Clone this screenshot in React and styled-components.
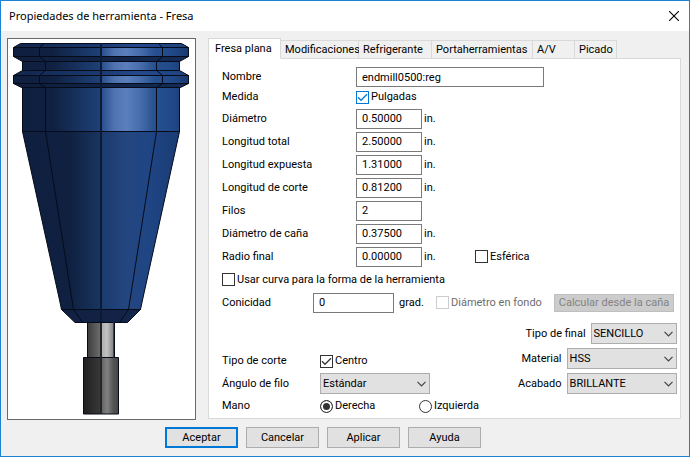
import React, { useState } from 'react'
import styled, { createGlobalStyle, css } from 'styled-components'

const GlobalStyle = createGlobalStyle`
    * {
        box-sizing: border-box;
    }
    body {
        margin: 0;
        background-color: #f0f0f0;
    }
    body, input, select, button {
        font-family: Roboto, "Liberation Sans", sans-serif;
        font-size: 11px;
        line-height: 16px;
        color: #000;
    }
`

const Window = styled.div`
    min-height: 100vh;
    display: flex;
    flex-direction: column;
    border: 1px solid #1883d7;
    background-color: #f0f0f0;
`

const TitleBar = styled.header`
    height: 30px;
    padding: 0 8px;
    display: flex;
    align-items: center;
    justify-content: space-between;
    background-color: #fff;
`

const Title = styled.h1`
    margin: 0;
    font-family: "Noto Sans", "Open Sans", sans-serif;
    font-size: 11px;
    font-weight: 400;
`

const CloseButton = styled.button`
    width: 14px;
    height: 14px;
    padding: 0;
    display: flex;
    align-items: center;
    justify-content: center;
    border: none;
    background: none;
`

const Body = styled.div`
    padding: 7px 8px 0 6px;
    display: flex;
    gap: 12px;
`

const Preview = styled.div`
    flex: 0 0 189px;
    height: 382px;
    border: 1px solid #696969;
    background-color: #fff;

    svg {
        display: block;
        width: 100%;
        height: 100%;
    }
`

const TabArea = styled.div`
    flex: 1;
    min-width: 0;
    display: flex;
    flex-direction: column;
    padding-bottom: 1px;
`

const TabList = styled.div`
    position: relative;
    z-index: 1;
    display: flex;
    align-items: flex-end;
    height: 21px;
`

const Tab = styled.button`
    width: ${props => props.$width};
    height: 19px;
    padding: 0 ${props => props.$first ? "6px" : "4px"};
    border: 1px solid #d9d9d9;
    border-left-width: ${props => props.$first ? "1px" : "0"};
    background-color: #f0f0f0;
    text-align: left;
    white-space: nowrap;
    ${props => props.$active && css`
        height: 21px;
        border-bottom-color: #fff;
        background-color: #fff;
    `}
`

const Panel = styled.form`
    flex: 1;
    margin-top: -1px;
    padding: 8px 5px 4px 13px;
    display: flex;
    flex-direction: column;
    border: 1px solid #d9d9d9;
    background-color: #fff;
`

const Row = styled.div`
    height: ${props => props.$height || "23px"};
    display: flex;
    align-items: center;
`

const FieldLabel = styled.label`
    flex: 0 0 ${props => props.$width || "134px"};
`

const GroupLabel = styled.span`
    flex: 0 0 ${props => props.$width || "134px"};
`

const TextInput = styled.input`
    width: ${props => props.$width || "66px"};
    height: 20px;
    padding: 0 5px;
    border: 1px solid #7a7a7a;
    background-color: #fff;
    outline: none;
`

const Unit = styled.span`
    width: ${props => props.$width || "53px"};
    padding-left: ${props => props.$gap || "2px"};
`

const CheckLabel = styled.label`
    display: flex;
    align-items: center;
    gap: 2px;
    color: ${props => props.$disabled ? "#6d6d6d" : "#000"};
`

const CheckMark = styled.span`
    display: grid;

    input, svg {
        grid-area: 1 / 1;
        width: 13px;
        height: 13px;
        margin: 0;
    }
    input {
        appearance: none;
        border: 1px solid ${props => props.$hot ? "#0078d7" : "#333"};
        background-color: #fff;
    }
    input:disabled {
        border-color: #ccc;
    }
    svg {
        pointer-events: none;
        visibility: hidden;
        color: ${props => props.$hot ? "#0078d7" : "#333"};
    }
    input:checked + svg {
        visibility: visible;
    }
`

const RadioLabel = styled.label`
    width: 99px;
    display: flex;
    align-items: center;
    gap: 2px;
`

const Radio = styled.input`
    appearance: none;
    width: 13px;
    height: 13px;
    margin: 0;
    border: 1px solid #333;
    border-radius: 50%;
    background-color: #fff;

    &:checked {
        background-color: #333;
        box-shadow: inset 0 0 0 2px #fff;
    }
`

const SelectBox = styled.span`
    width: ${props => props.$width || "110px"};
    display: grid;
    align-items: center;

    select, svg {
        grid-area: 1 / 1;
    }
    select {
        appearance: none;
        width: 100%;
        height: 21px;
        padding: 0 2px;
        border: 1px solid #adadad;
        border-radius: 0;
        background-color: #e1e1e1;
    }
    svg {
        justify-self: end;
        margin-right: 4px;
        pointer-events: none;
    }
`

const Button = styled.button`
    width: 73px;
    height: 21px;
    padding: 0;
    border: ${props => props.$primary ? "2px solid #0078d7" : "1px solid #adadad"};
    background-color: #e1e1e1;
`

const CalcButton = styled.button`
    width: 120px;
    height: 18px;
    margin: 0 1px 0 auto;
    padding: 0;
    border: 1px solid #bfbfbf;
    background-color: #ccc;
    color: #838383;
    white-space: nowrap;
`

const Lower = styled.div`
    margin-top: auto;
    display: flex;
    justify-content: space-between;
    align-items: flex-end;
`

const CutOptions = styled.div`
    display: flex;
    flex-direction: column;
    gap: 4px;
`

const FinishOptions = styled.div`
    padding-bottom: 20px;
    display: flex;
    flex-direction: column;
    align-items: flex-end;
    gap: 4px;
`

const SelectRow = styled.div`
    display: flex;
    align-items: center;
    gap: 5px;
`

const Footer = styled.footer`
    padding: 7px 0 8px 164px;
    display: flex;
    gap: 8px;
`

const tabs = [
    { name: "Fresa plana", width: "73px" },
    { name: "Modificaciones", width: "78px" },
    { name: "Refrigerante", width: "73px" },
    { name: "Portaherramientas", width: "101px" },
    { name: "A/V", width: "42px" },
    { name: "Picado", width: "42px" },
]

const fields = [
    { id: "diametro", label: "Diámetro", value: "0.50000", unit: "in." },
    { id: "total", label: "Longitud total", value: "2.50000", unit: "in." },
    { id: "expuesta", label: "Longitud expuesta", value: "1.31000", unit: "in." },
    { id: "corte", label: "Longitud de corte", value: "0.81200", unit: "in." },
    { id: "filos", label: "Filos", value: "2" },
    { id: "cana", label: "Diámetro de caña", value: "0.37500", unit: "in." },
    { id: "radio", label: "Radio final", value: "0.00000", unit: "in.", spherical: true },
]

const Check = ({ label, hot, disabled, defaultChecked }) => (
    <CheckLabel $disabled={disabled}>
        <CheckMark $hot={hot}>
            <input type="checkbox" disabled={disabled} defaultChecked={defaultChecked} />
            <svg viewBox="0 0 13 13" fill="none" stroke="currentColor" strokeWidth="1.3">
                <path d="M2 6.3 L5 9.3 L11 3.3" />
            </svg>
        </CheckMark>
        {label}
    </CheckLabel>
)

const Select = ({ id, width, value }) => (
    <SelectBox $width={width}>
        <select id={id} defaultValue={value}>
            <option>{value}</option>
        </select>
        <svg width="9" height="6" viewBox="0 0 9 6" fill="none" stroke="#444" strokeWidth="1.2">
            <path d="M0.5 0.8 L4.5 4.8 L8.5 0.8" />
        </svg>
    </SelectBox>
)

const ToolDrawing = () => (
    <svg viewBox="8 39 187 380" role="img">
        <defs>
            <linearGradient id="steel" gradientUnits="userSpaceOnUse" x1="13" y1="0" x2="188" y2="0">
                <stop offset="0" stopColor="#0f1f40" />
                <stop offset="0.22" stopColor="#0f2040" />
                <stop offset="0.5" stopColor="#1e4178" />
                <stop offset="0.51" stopColor="#2b5190" />
                <stop offset="0.58" stopColor="#5073b0" />
                <stop offset="0.65" stopColor="#5b7ebc" />
                <stop offset="0.72" stopColor="#4a6fae" />
                <stop offset="0.81" stopColor="#26508f" />
                <stop offset="0.9" stopColor="#224a8a" />
                <stop offset="1" stopColor="#193a70" />
            </linearGradient>
            <linearGradient id="bevel" gradientUnits="userSpaceOnUse" x1="13" y1="0" x2="188" y2="0">
                <stop offset="0" stopColor="#10254c" />
                <stop offset="0.5" stopColor="#1b3a70" />
                <stop offset="0.7" stopColor="#25488a" />
                <stop offset="1" stopColor="#1d4380" />
            </linearGradient>
            <linearGradient id="under" gradientUnits="userSpaceOnUse" x1="13" y1="0" x2="188" y2="0">
                <stop offset="0" stopColor="#0f1e3c" />
                <stop offset="0.6" stopColor="#122347" />
                <stop offset="1" stopColor="#152c57" />
            </linearGradient>
            <linearGradient id="cone">
                <stop offset="0" stopColor="#0f1f40" />
                <stop offset="0.3" stopColor="#0f2040" />
                <stop offset="0.49" stopColor="#18355f" />
                <stop offset="0.51" stopColor="#1c3b6e" />
                <stop offset="0.66" stopColor="#24467f" />
                <stop offset="0.8" stopColor="#1f4584" />
                <stop offset="1" stopColor="#1a3c74" />
            </linearGradient>
            <linearGradient id="shank">
                <stop offset="0" stopColor="#3c3c3c" />
                <stop offset="0.45" stopColor="#6a6a6a" />
                <stop offset="0.55" stopColor="#b0b0b0" />
                <stop offset="0.72" stopColor="#c2c2c2" />
                <stop offset="1" stopColor="#777" />
            </linearGradient>
            <linearGradient id="cutter">
                <stop offset="0" stopColor="#202020" />
                <stop offset="0.48" stopColor="#383838" />
                <stop offset="0.55" stopColor="#6a6a6a" />
                <stop offset="0.68" stopColor="#808080" />
                <stop offset="0.85" stopColor="#545454" />
                <stop offset="1" stopColor="#444" />
            </linearGradient>
        </defs>
        <g stroke="#050b18" strokeWidth="1" strokeLinejoin="round">
            <path fill="url(#bevel)" d="M20.5 43.5 H181.5 L188.5 47.5 H13.5 Z" />
            <path fill="url(#steel)" d="M13.5 47.5 H188.5 V56.5 H13.5 Z" />
            <path fill="url(#under)" d="M13.5 56.5 H188.5 L179.5 61.5 H22.5 Z" />
            <path fill="url(#steel)" d="M22.5 61.5 H179.5 V70.5 H22.5 Z" />
            <path fill="url(#bevel)" d="M22.5 70.5 H179.5 L188.5 75.5 H13.5 Z" />
            <path fill="url(#steel)" d="M13.5 75.5 H188.5 V83.5 H13.5 Z" />
            <path fill="url(#under)" d="M13.5 83.5 H188.5 L180.5 87.5 H21.5 Z" />
            <path fill="url(#steel)" d="M22.5 87.5 H179.5 V131.5 H22.5 Z" />
            <path fill="url(#cone)" d="M22.5 131.5 H179.5 L142.5 300 L140.5 309.5 H61.5 L59.5 300 Z" />
            <path fill="url(#under)" d="M61.5 309.5 H140.5 L127.5 322.5 H75 Z" />
            <path fill="url(#shank)" d="M87.5 322.5 H114.5 V357.5 H87.5 Z" />
            <path fill="url(#cutter)" d="M83.5 357.5 H118.5 V414 H83.5 Z" />
        </g>
        <g fill="none" stroke="#050b18" strokeWidth="1">
            <path d="M44 43.5 L39.5 47.5 V56.5 L45.5 61.5 V70.5 L39.5 75.5 V83.5 L45.5 87.5 V131.5 L73.5 309.5 L82.5 322.5" />
            <path d="M158.5 43.5 L162.5 47.5 V56.5 L156.5 61.5 V70.5 L162.5 75.5 V83.5 L156.5 87.5 V131.5 L128.5 309.5 L119.5 322.5" />
            <path d="M113.5 322.5 V357.5" stroke="#444" />
        </g>
        <path d="M101 43 V322" stroke="#0c1a33" strokeWidth="2" />
        <path d="M101 323 V414" stroke="#262626" strokeWidth="2" />
    </svg>
)

const App = () => {
    const [activeTab, setActiveTab] = useState(0)

    return (
        <Window>
            <GlobalStyle />
            <TitleBar>
                <Title>Propiedades de herramienta - Fresa</Title>
                <CloseButton aria-label="Cerrar">
                    <svg width="10" height="10" viewBox="0 0 10 10" stroke="#000" strokeWidth="1.1">
                        <path d="M0 0 L10 10 M10 0 L0 10" />
                    </svg>
                </CloseButton>
            </TitleBar>
            <Body>
                <Preview>
                    <ToolDrawing />
                </Preview>
                <TabArea>
                    <TabList role="tablist">
                        {tabs.map((tab, index) => (
                            <Tab
                                key={tab.name}
                                type="button"
                                role="tab"
                                aria-selected={index === activeTab}
                                $width={tab.width}
                                $first={index === 0}
                                $active={index === activeTab}
                                onClick={() => setActiveTab(index)}
                            >
                                {tab.name}
                            </Tab>
                        ))}
                    </TabList>
                    <Panel>
                        <Row $height="20px">
                            <FieldLabel htmlFor="nombre">Nombre</FieldLabel>
                            <TextInput id="nombre" $width="188px" defaultValue="endmill0500:reg" />
                        </Row>
                        <Row $height="20px">
                            <GroupLabel>Medida</GroupLabel>
                            <Check label="Pulgadas" hot defaultChecked />
                        </Row>
                        {fields.map(field => (
                            <Row key={field.id}>
                                <FieldLabel htmlFor={field.id}>{field.label}</FieldLabel>
                                <TextInput id={field.id} defaultValue={field.value} />
                                {field.unit && <Unit>{field.unit}</Unit>}
                                {field.spherical && <Check label="Esférica" />}
                            </Row>
                        ))}
                        <Row>
                            <Check label="Usar curva para la forma de la herramienta" />
                        </Row>
                        <Row>
                            <FieldLabel htmlFor="conicidad" $width="91px">Conicidad</FieldLabel>
                            <TextInput id="conicidad" $width="81px" defaultValue="0" />
                            <Unit $width="42px" $gap="5px">grad.</Unit>
                            <Check label="Diámetro en fondo" disabled />
                            <CalcButton type="button" disabled>Calcular desde la caña</CalcButton>
                        </Row>
                        <Lower>
                            <CutOptions>
                                <Row $height="16px">
                                    <GroupLabel $width="98px">Tipo de corte</GroupLabel>
                                    <Check label="Centro" defaultChecked />
                                </Row>
                                <Row $height="21px">
                                    <FieldLabel htmlFor="angulo" $width="98px">Ángulo de filo</FieldLabel>
                                    <Select id="angulo" value="Estándar" />
                                </Row>
                                <Row $height="16px">
                                    <GroupLabel $width="98px">Mano</GroupLabel>
                                    <RadioLabel>
                                        <Radio type="radio" name="mano" defaultChecked />
                                        Derecha
                                    </RadioLabel>
                                    <RadioLabel>
                                        <Radio type="radio" name="mano" />
                                        Izquierda
                                    </RadioLabel>
                                </Row>
                            </CutOptions>
                            <FinishOptions>
                                <SelectRow>
                                    <label htmlFor="final">Tipo de final</label>
                                    <Select id="final" width="86px" value="SENCILLO" />
                                </SelectRow>
                                <SelectRow>
                                    <label htmlFor="material">Material</label>
                                    <Select id="material" value="HSS" />
                                </SelectRow>
                                <SelectRow>
                                    <label htmlFor="acabado">Acabado</label>
                                    <Select id="acabado" value="BRILLANTE" />
                                </SelectRow>
                            </FinishOptions>
                        </Lower>
                    </Panel>
                </TabArea>
            </Body>
            <Footer>
                <Button $primary>Aceptar</Button>
                <Button>Cancelar</Button>
                <Button>Aplicar</Button>
                <Button>Ayuda</Button>
            </Footer>
        </Window>
    )
}

export default App
